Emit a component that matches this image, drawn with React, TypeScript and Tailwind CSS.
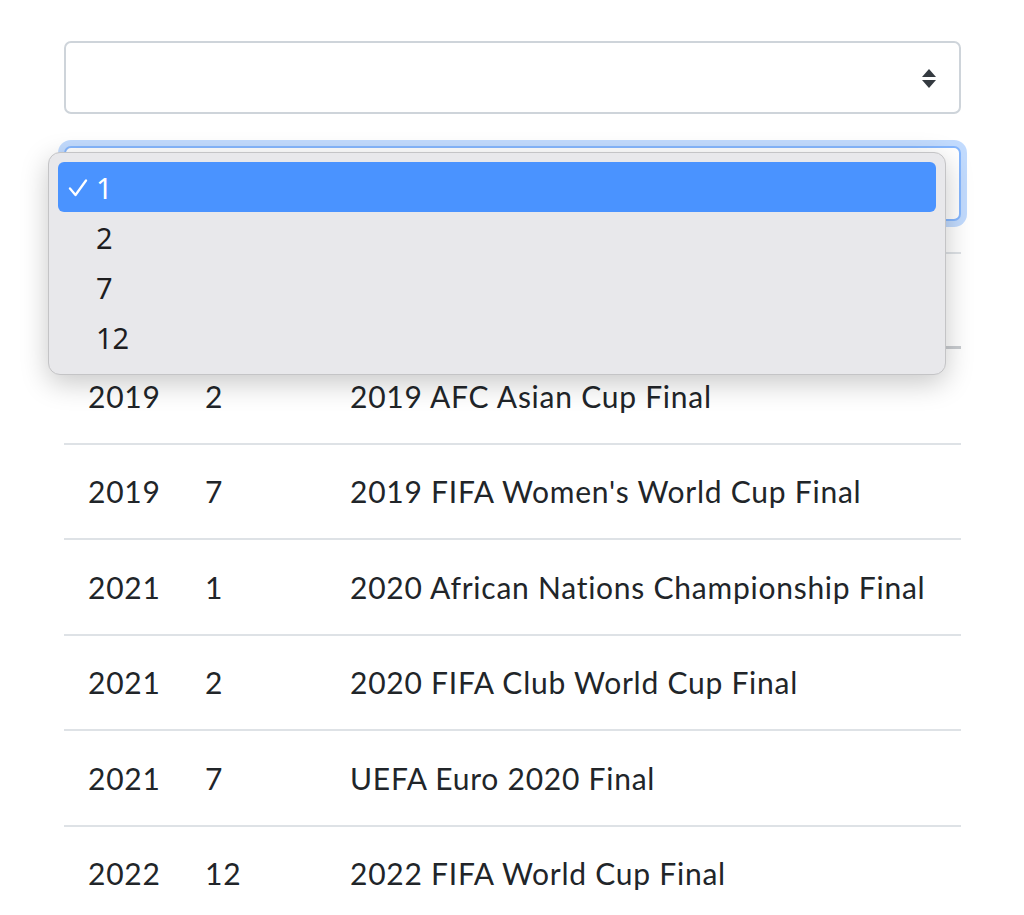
import React from "react";

const rows: [string, string, string][] = [
  ["2019", "2", "2019 AFC Asian Cup Final"],
  ["2019", "7", "2019 FIFA Women's World Cup Final"],
  ["2021", "1", "2020 African Nations Championship Final"],
  ["2021", "2", "2020 FIFA Club World Cup Final"],
  ["2021", "7", "UEFA Euro 2020 Final"],
  ["2022", "12", "2022 FIFA World Cup Final"],
];

export default function App() {
  return (
    <div
      className="relative min-h-[915px] w-[1024px] overflow-hidden bg-white pl-[64px] pr-[63px] pt-[41px] text-[#212529]"
      style={{ fontFamily: "Lato, 'Noto Sans', sans-serif" }}
    >
      {/* first select */}
      <div className="flex h-[73px] items-center justify-end rounded-[7px] border-2 border-[#ced4da] bg-white pr-[22px]">
        <svg width="16" height="20" viewBox="0 0 16 20">
          <path d="M8 1 L15 9 L1 9 Z" fill="#343a40" />
          <path d="M1 12 L15 12 L8 20 Z" fill="#343a40" />
        </svg>
      </div>

      {/* second select (focused) */}
      <div className="mt-[32px] h-[75px] rounded-[7px] border-2 border-[#86b7fe] bg-white shadow-[0_0_0_6px_rgba(13,110,253,0.25)]" />

      {/* table */}
      <div className="mt-[31px] border-t-2 border-[#dee2e6]">
        <div className="h-[95px] border-b-[3px] border-[#c9ccd0]" />
        {rows.map((r, i) => (
          <div
            key={i}
            className="flex h-[95.5px] items-center border-b-2 border-[#dee2e6] text-[30px] leading-none tracking-[0.75px]"
          >
            <span className="w-[117px] pl-[24px]">{r[0]}</span>
            <span className="w-[145px] pl-[24px]">{r[1]}</span>
            <span className="pl-[24px]">{r[2]}</span>
          </div>
        ))}
      </div>

      {/* dropdown */}
      <div className="absolute left-[48px] top-[152px] w-[898px] rounded-[12px] border border-[#c4c4c6] bg-[#e8e8eb] px-[9px] pb-[12px] pt-[9px] shadow-[0_8px_28px_rgba(0,0,0,0.22)]">
        {["1", "2", "7", "12"].map((v, i) => (
          <div
            key={v}
            className={
              "relative flex h-[50px] items-center rounded-[6px] pl-[38px] text-[29px] leading-none " +
              (i === 0 ? "bg-[#4a93ff] text-white" : "text-[#1d1d1f]")
            }
            style={{ fontFamily: "'Noto Sans', 'Liberation Sans', sans-serif" }}
          >
            {i === 0 && (
              <svg
                className="absolute left-[10px] top-[17px]"
                width="20"
                height="18"
                viewBox="0 0 20 18"
              >
                <path
                  d="M2 9.5 L7.5 16 L18 1.5"
                  fill="none"
                  stroke="white"
                  strokeWidth="2.3"
                  strokeLinecap="round"
                  strokeLinejoin="round"
                />
              </svg>
            )}
            {v}
          </div>
        ))}
      </div>
    </div>
  );
}
